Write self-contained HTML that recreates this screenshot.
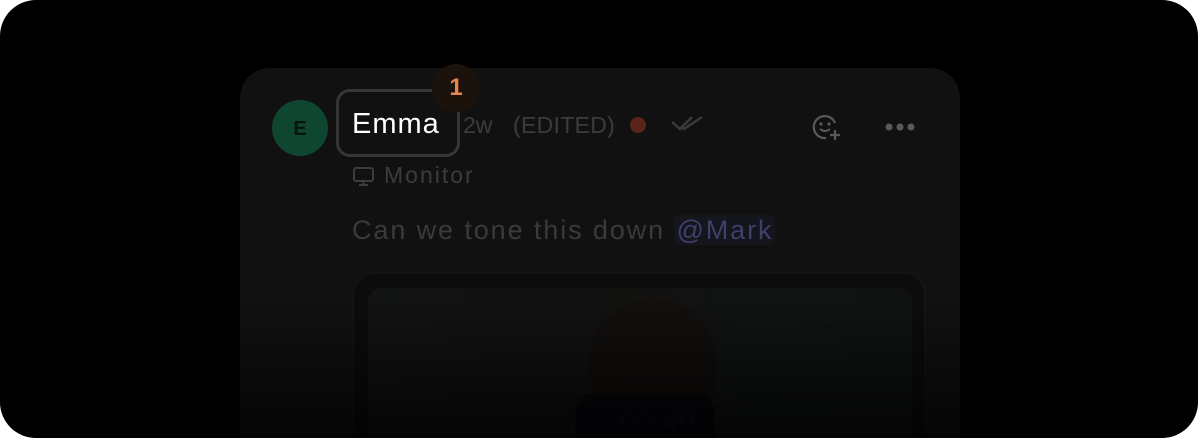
<!DOCTYPE html>
<html><head><style>
html,body{margin:0;padding:0;background:#fff;overflow:hidden;}
.wrap{position:relative;width:1198px;height:438px;background:#000;border-radius:36px;overflow:hidden;font-family:"Liberation Sans",sans-serif;}
.card{position:absolute;left:240px;top:68px;width:720px;height:370px;background:#111;border-radius:30px 30px 0 0;}
.av{position:absolute;left:272px;top:100px;width:56px;height:56px;border-radius:50%;background:#0f4630;color:#08150e;font-weight:bold;font-size:20px;text-align:center;line-height:58px;}
.nb{position:absolute;left:336px;top:89px;width:124px;height:68px;border:3px solid #363636;border-radius:14px;box-sizing:border-box;}
.name{position:absolute;left:352px;top:108px;color:#fff;font-size:29px;letter-spacing:1px;}
.badge{position:absolute;left:432px;top:64px;width:48px;height:48px;border-radius:50%;background:#1c120c;color:#e7854a;font-size:24px;font-weight:bold;text-align:center;line-height:48px;}
.meta{position:absolute;top:112px;color:#3c3c3c;font-size:23px;}
.dot{position:absolute;left:630px;top:117px;width:16px;height:16px;border-radius:50%;background:#5a241b;}
.mon{position:absolute;left:384px;top:162px;color:#3c3c3c;font-size:23px;letter-spacing:2px;}
.txt{position:absolute;left:352px;top:215px;color:#3a3a3a;font-size:27px;letter-spacing:1.9px;}
.ment{background:#15151d;color:#3f3f6a;border-radius:6px;padding:0 2px;}
.frame{position:absolute;left:352px;top:272px;width:574px;height:200px;border-radius:22px;background:#0c0c0c;border:2px solid #141414;box-sizing:border-box;}
.img{position:absolute;left:368px;top:288px;width:544px;height:180px;border-radius:14px;background:linear-gradient(90deg,#121313 0%,#111211 40%,#131211 50%,#101413 70%,#101312 100%);}
.ball{position:absolute;left:588px;top:298px;width:130px;height:140px;border-radius:50%;background:#120f0d;}
.pill{position:absolute;left:575px;top:393px;width:140px;height:60px;border-radius:20px;background:#08080f;color:#0e0e18;font-size:30px;padding-left:45px;box-sizing:border-box;line-height:60px;}
.fade{position:absolute;left:0;top:300px;width:1198px;height:138px;background:linear-gradient(transparent,rgba(0,0,0,.75));}
</style></head><body>
<div class="wrap">
<div class="card"></div>
<div class="frame"></div>
<div class="img"></div>
<div class="ball"></div>
<div class="pill">00:40</div>
<div class="fade"></div>
<div class="av">E</div>
<div class="nb"></div>
<div class="name">Emma</div>
<div class="badge">1</div>
<div class="meta" style="left:463px">2w</div>
<div class="meta" style="left:513px;letter-spacing:0.3px">(EDITED)</div>
<div class="dot"></div>
<svg style="position:absolute;left:670px;top:114px" width="34" height="20" viewBox="0 0 34 20"><path d="M2 8l8 7L22 3M12 13l2 2L32 3" stroke="#3a3a3a" stroke-width="2.5" fill="none"/></svg>
<svg style="position:absolute;left:812px;top:113px" width="32" height="30" viewBox="0 0 32 30"><path d="M23 10A11 11 0 1 0 14 25" stroke="#5a5a5a" stroke-width="2.2" fill="none"/><circle cx="9" cy="11" r="1.6" fill="#5a5a5a"/><circle cx="17" cy="11" r="1.6" fill="#5a5a5a"/><path d="M8 16q5 4 10 0" stroke="#5a5a5a" stroke-width="2" fill="none"/><path d="M23 17v10M18 22h10" stroke="#5a5a5a" stroke-width="2.2"/></svg>
<svg style="position:absolute;left:882px;top:120px" width="36" height="14"><circle cx="7" cy="7" r="3.5" fill="#5a5a5a"/><circle cx="18" cy="7" r="3.5" fill="#5a5a5a"/><circle cx="29" cy="7" r="3.5" fill="#5a5a5a"/></svg>
<svg style="position:absolute;left:352px;top:166px" width="24" height="22"><rect x="2" y="2" width="19" height="13" rx="2" stroke="#3c3c3c" stroke-width="2" fill="none"/><path d="M7 19h9M11.5 15v4" stroke="#3c3c3c" stroke-width="2"/></svg>
<div class="mon">Monitor</div>
<div class="txt">Can we tone this down <span class="ment">@Mark</span></div>
</div>
</body></html>
